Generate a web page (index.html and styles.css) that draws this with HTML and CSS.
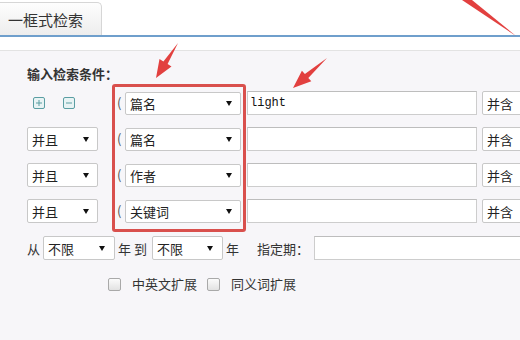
FILE: index.html
```html
<!DOCTYPE html>
<html lang="zh-CN">
<head>
    <meta charset="UTF-8">
    <title>一框式检索</title>
    <link rel="stylesheet" href="styles.css">
</head>
<body>
<div class="page">
    <!-- 标签栏 -->
    <div class="tabbar">
        <div class="tab">一框式检索</div>
    </div>
    <div class="subbar"></div>

    <!-- 检索条件 -->
    <div class="panel">
        <div class="panel-title">输入检索条件：</div>

        <div class="cond">
            <div class="col col-logic">
                <div class="ops">
                    <svg class="ico" width="12" height="12" viewBox="0 0 12 12"><rect x="0.5" y="0.5" width="11" height="11" rx="1.5"/><path d="M3 6h6M6 3v6"/></svg>
                    <svg class="ico" width="12" height="12" viewBox="0 0 12 12"><rect x="0.5" y="0.5" width="11" height="11" rx="1.5"/><path d="M3 6h6"/></svg>
                </div>
                <div class="sel sel-logic"><span>并且</span><i class="caret"></i></div>
                <div class="sel sel-logic"><span>并且</span><i class="caret"></i></div>
                <div class="sel sel-logic"><span>并且</span><i class="caret"></i></div>
            </div>

            <div class="col col-field">
                <div class="field"><span class="paren">(</span><div class="sel sel-field"><span>篇名</span><i class="caret"></i></div></div>
                <div class="field"><span class="paren">(</span><div class="sel sel-field"><span>篇名</span><i class="caret"></i></div></div>
                <div class="field"><span class="paren">(</span><div class="sel sel-field"><span>作者</span><i class="caret"></i></div></div>
                <div class="field"><span class="paren">(</span><div class="sel sel-field"><span>关键词</span><i class="caret"></i></div></div>
            </div>

            <div class="col col-kw">
                <input class="kw" type="text" value="light">
                <input class="kw" type="text" value="">
                <input class="kw" type="text" value="">
                <input class="kw" type="text" value="">
            </div>

            <div class="col col-match">
                <div class="sel sel-match"><span>并含</span></div>
                <div class="sel sel-match"><span>并含</span></div>
                <div class="sel sel-match"><span>并含</span></div>
                <div class="sel sel-match"><span>并含</span></div>
            </div>
        </div>

        <div class="year-row">
            <span>从</span>
            <div class="sel sel-year"><span>不限</span><i class="caret"></i></div>
            <span class="t-mid">年 到</span>
            <div class="sel sel-year sel-year2"><span>不限</span><i class="caret"></i></div>
            <span class="t-year">年</span>
            <span class="t-date">指定期：</span>
            <input class="date-input" type="text">
        </div>

        <div class="ext-row">
            <span class="cb"></span><span class="cb-label">中英文扩展</span>
            <span class="cb"></span><span class="cb-label">同义词扩展</span>
        </div>
    </div>

    <!-- 标注箭头 -->
    <svg class="marks" width="520" height="340" viewBox="0 0 520 340">
        <polygon points="462,0 472,0 516,36"/>
        <polygon points="178,43 167.6,64 171.5,66.4 156,78 159.5,59 163.4,61.4"/>
        <polygon points="327,58 308.3,77.9 311.3,81.3 293,88 301.9,70.7 304.9,74.1"/>
    </svg>
</div>
</body>
</html>
```

FILE: styles.css
```css
* {
    box-sizing: border-box;
    margin: 0;
    padding: 0;
}

body {
    background-color: #f7f6f9;
    color: #222;
    font-family: 'Noto Sans CJK SC', 'Liberation Sans', sans-serif;
    font-size: 13px;
    width: 520px;
    height: 340px;
    overflow: hidden;
}

.page {
    position: relative;
    height: 340px;
}

/* 标签栏 */
.tabbar {
    height: 37px;
    background-color: #fff;
    border-bottom: 2px solid #6f9fcc;
    display: flex;
    align-items: flex-end;
}

.tab {
    width: 103px;
    height: 33px;
    margin-left: -1px;
    padding-left: 8px;
    padding-top: 1px;
    line-height: 31px;
    font-size: 15px;
    color: #333;
    background: linear-gradient(#fdfdfd, #ededed);
    border: 1px solid #d6d6d6;
    border-bottom: none;
    border-top-right-radius: 5px;
}

.subbar {
    height: 14px;
    background-color: #fff;
    border-bottom: 1px solid #e3e3e3;
}

.panel {
    padding: 14px 0 0 27px;
}

.panel-title {
    font-weight: bold;
    line-height: 18px;
    color: #333;
}

/* 条件表 */
.cond {
    display: flex;
    margin-top: 8px;
}

.col {
    display: flex;
    flex-direction: column;
    flex-shrink: 0;
    gap: 12px;
}

.col-logic {
    width: 85px;
}

.ops {
    height: 24px;
    display: flex;
    align-items: center;
    gap: 18px;
    padding-left: 6px;
}

.ico {
    fill: #e8f3f4;
    stroke: #5b9ea3;
    stroke-width: 1;
}

.col-field {
    width: 134px;
    margin: -7px 0 -9px 0;
    padding: 4px 2px 6px 2px;
    border: 3px solid #d9504d;
    border-radius: 3px;
}

.field {
    height: 24px;
    display: flex;
    align-items: center;
}

.paren {
    width: 8px;
    flex-shrink: 0;
    color: #555;
    line-height: 24px;
}

.col-kw {
    margin-left: 1px;
}

.kw {
    width: 230px;
    height: 24px;
    border: 1px solid #cdcdcd;
    border-top-color: #bdbdbd;
    background-color: #fff;
    padding-left: 2px;
    font-family: 'Liberation Mono', monospace;
    font-size: 12px;
    color: #111;
    outline: none;
}

.col-match {
    margin-left: 5px;
}

/* 模拟下拉框 */
.sel {
    height: 24px;
    flex-shrink: 0;
    display: flex;
    align-items: center;
    justify-content: space-between;
    background-color: #fff;
    border: 1px solid #c8c8c8;
    border-radius: 2px;
    padding: 0 8px 0 4px;
    color: #222;
}

.caret {
    width: 0;
    height: 0;
    border-left: 3px solid transparent;
    border-right: 3px solid transparent;
    border-top: 5px solid #111;
}

.sel-logic {
    width: 71px;
}

.sel-field {
    width: 116px;
    height: 23px;
}

.sel-match {
    width: 60px;
}

/* 年份行 */
.year-row {
    display: flex;
    align-items: center;
    height: 24px;
    margin-top: 13px;
    white-space: nowrap;
    color: #333;
}

.year-row > * {
    flex-shrink: 0;
}

.sel-year {
    width: 72px;
    margin-left: 3px;
    padding-right: 9px;
}

.sel-year2 {
    width: 71px;
    margin-left: 5px;
}

.t-mid {
    margin-left: 3px;
}

.t-year {
    margin-left: 3px;
}

.t-date {
    margin-left: 18px;
}

.date-input {
    width: 220px;
    height: 24px;
    margin-left: 5px;
    border: 1px solid #cdcdcd;
    border-top-color: #bdbdbd;
    background-color: #fff;
    outline: none;
}

/* 扩展选项 */
.ext-row {
    display: flex;
    align-items: center;
    line-height: 18px;
    margin-top: 15px;
    padding-left: 81px;
    color: #333;
}

.cb {
    width: 13px;
    height: 13px;
    flex-shrink: 0;
    border: 1px solid #a9a9a9;
    border-radius: 2px;
    background: linear-gradient(#fbfbfb, #e2e2e2);
}

.cb-label {
    margin-left: 11px;
    margin-right: 10px;
}

/* 标注 */
.marks {
    position: absolute;
    left: 0;
    top: 0;
    pointer-events: none;
    fill: #e2403f;
}
```
